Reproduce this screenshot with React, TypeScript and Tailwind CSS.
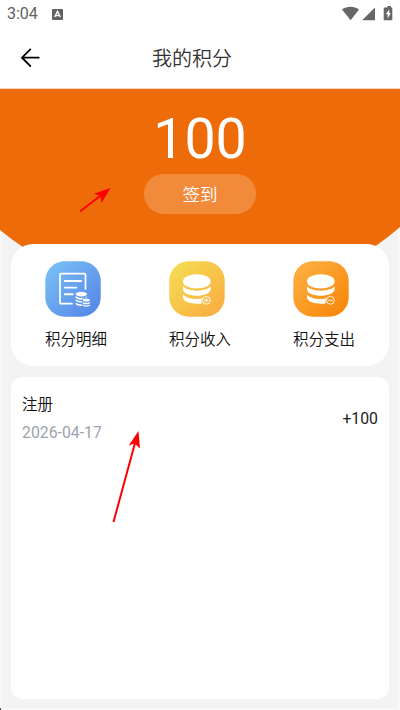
import type { ReactNode } from 'react';

function StatusBar() {
  return (
    <div className="flex h-7 items-center justify-between px-[7px] text-[#626262]">
      <div className="flex items-center">
        <span className="w-[45px] text-[16px] font-normal leading-7">3:04</span>
        <svg className="h-[11px] w-[11px]" viewBox="0 0 11 11">
          <rect width="11" height="11" rx="1" fill="#626262" />
          <path d="M2.7 8 5.5 2.4 8.3 8M4 6.6h3" fill="none" stroke="#fff" strokeWidth="1.4" />
        </svg>
      </div>
      <svg className="-mt-px h-[15px] w-[51px]" viewBox="0 0 51 15" fill="#666">
        <path d="M0 3.4C5 0 12 0 17 3.4L8.6 14.2z" />
        <path d="M33 1.6V14.2H20.2z" />
        <path d="M44 1.5h1.4V0h3.6v1.5h1.3V14.3H41.7V1.5z" />
        <path d="M47.4 3.2 43.8 8.3h1.9v4.2l3.1-5.4h-1.7z" fill="#fff" />
      </svg>
    </div>
  );
}

function DetailIcon() {
  return (
    <svg className="-ml-[0.3px] h-14 w-14" viewBox="0 0 56 56" fill="none">
      <defs>
        <linearGradient id="blue" x1="0" y1="0" x2="1" y2="1">
          <stop offset="0" stopColor="#7cc4f5" />
          <stop offset="1" stopColor="#5381e6" />
        </linearGradient>
      </defs>
      <path d="M20 .3H36C47 .3 55.7 9 55.7 20V36C55.7 47 47 55.7 36 55.7H20C9 55.7 .3 47 .3 36V20C.3 9 9 .3 20 .3z" fill="url(#blue)" />
      <path d="M27 42.7H16Q15 42.700 15 41.700V13.700Q15 12.700 16 12.700H39.500Q40.500 12.700 40.500 13.700V28" stroke="#fff" strokeWidth="1.7" strokeLinecap="round" />
      <path d="M19.800 20h16.500M19.800 26.600h11.500M19.800 33.300h8" stroke="#fff" strokeWidth="1.900" strokeLinecap="round" />
      <g fill="#fff">
        <ellipse cx="36.300" cy="33.100" rx="5.700" ry="2.300" />
        <path d="M30.600 35q2.500 2 5.700 2t5.700-1.800v1.100q-3.200.1-4.300 1.200-.5.500-.4 1.300-4-.1-6.700-1.900z" />
        <path d="M30.600 38.600q2.500 1.500 6.600 1.800v1.300q-4-.1-6.600-1.600zM30.600 41.700q2.500 1.500 6.600 1.800v1.400q-5.800-.2-6.600-2z" />
        <ellipse cx="41.300" cy="38.900" rx="3.500" ry="1.500" />
        <path d="M37.800 40.900q3.500 1.800 7 0v1.500q-3.500 1.800-7 0zM37.800 43.600q3.500 1.800 7 0v1.200q-3.500 1.800-7 0z" />
      </g>
    </svg>
  );
}

// Stack of coins with a small plus or minus badge
function CoinsIcon({ id, from, to, plus }: { id: string; from: string; to: string; plus?: boolean }) {
  return (
    <svg className="h-14 w-14" viewBox="0 0 56 56" fill="none">
      <defs>
        <linearGradient id={id} x1="0" y1="0" x2="1" y2="1">
          <stop offset="0" stopColor={from} />
          <stop offset="1" stopColor={to} />
        </linearGradient>
      </defs>
      <path d="M20 .3H36C47 .3 55.7 9 55.7 20V36C55.7 47 47 55.7 36 55.7H20C9 55.7 .3 47 .3 36V20C.3 9 9 .3 20 .3z" fill={`url(#${id})`} />
      <g fill="#fff">
        <ellipse cx="27.800" cy="20.400" rx="13.800" ry="7.200" />
        <path d="M14 25.300C18.500 31.100 37.100 31.100 41.600 25.300V28.500C40.500 36.800 15.100 36.800 14 28.500z" />
        <path d="M14 33.400C17.500 37.800 27 38.700 33.900 37.300Q32 39.600 32.600 42.500C23.500 43.500 14 41.300 14 36.300z" />
      </g>
      <circle cx="37.400" cy="39.300" r="3.900" stroke="#fff" strokeWidth=".9" />
      <path d={plus ? 'M35.1 39.3h4.600M37.400 37v4.600' : 'M35.1 39.3h4.600'} stroke="#fff" strokeWidth=".9" />
    </svg>
  );
}

function MenuItem({ icon, label }: { icon: ReactNode; label: string }) {
  return (
    <button className="flex w-[62px] flex-col items-start">
      {icon}
      <span className="mt-[11px] whitespace-nowrap text-[15.5px] leading-6 text-[#111]">{label}</span>
    </button>
  );
}

export default function App() {
  return (
    <div className="relative flex h-[710px] w-[400px] flex-col overflow-hidden bg-[#f3f3f3] font-[Roboto,'Noto_Sans_CJK_SC',sans-serif] font-[350] shadow-[inset_2px_0_#f8f8f8,inset_-2px_0_#f8f8f8,inset_0_-2px_#f8f8f8]">
      <header className="h-[89px] shrink-0 border-b border-[#f8d3b5] bg-white">
        <StatusBar />
        <div className="grid h-[60px] grid-cols-[60px_1fr_60px] items-center">
          <button className="pl-[20px]">
            <svg className="h-5 w-5" viewBox="0 0 20 20" fill="none" stroke="#000" strokeWidth="1.800" strokeLinecap="round">
              <path d="M10.300 1.400 2 9.700 10.300 18M2 9.700H18.700" />
            </svg>
          </button>
          <h1 className="-ml-4 mt-[2px] text-center text-[20px] leading-7 text-[#333]">我的积分</h1>
        </div>
      </header>

      <section className="relative flex h-[155px] shrink-0 flex-col items-center text-white">
        <svg className="absolute left-0 top-0 h-[180px] w-[400px]" viewBox="0 0 400 180">
          <path d="M0 0H400V138Q388 148.500 375 157.500L340 180H60L23 158Q12 151 0 141z" fill="#ed6c09" />
        </svg>
        <div className="relative mt-[19px] text-[55.5px] font-normal leading-[64px]">100</div>
        <button className="relative mt-[2px] h-10 w-28 rounded-full bg-[#f28a3c] text-[17.5px] leading-[42px]">签到</button>
      </section>

      <section className="relative mx-[11px] flex h-[121.500px] shrink-0 justify-between rounded-[22px] bg-white px-[34px] pt-[17px]">
        <MenuItem icon={<DetailIcon />} label="积分明细" />
        <MenuItem icon={<CoinsIcon id="yellow" from="#f5df54" to="#faaa40" plus />} label="积分收入" />
        <MenuItem icon={<CoinsIcon id="orange" from="#fdb347" to="#f88305" />} label="积分支出" />
      </section>

      <section className="mx-[11px] mt-[11.500px] h-[322px] shrink-0 rounded-[12px] bg-white px-[11px] pt-[15px]">
        <div className="flex items-center justify-between text-[15.5px] text-[#111]">
          <div>
            <div className="leading-[27px]">注册</div>
            <div className="text-[15.8px] font-normal leading-[27px] text-[#9ca3af]">2026-04-17</div>
          </div>
          <span className="text-[15.8px] font-normal text-[#222]">+100</span>
        </div>
      </section>

      {/* Pointer arrows over the page */}
      <svg className="pointer-events-none absolute left-0 top-0 h-[710px] w-[400px]" viewBox="0 0 400 710" fill="#f00">
        <path d="M80 211.500 102 194.500M113.500 522 135 443" stroke="#f00" strokeWidth="2" />
        <path d="M110.700 187.700 94 193.700 100.500 196 101.500 203z" />
        <path d="M138.500 431 128.700 445.500 134.600 443.500 140 448.500z" />
        <path d="M0 708h1v2H0z" fill="#555" />
      </svg>
    </div>
  );
}
